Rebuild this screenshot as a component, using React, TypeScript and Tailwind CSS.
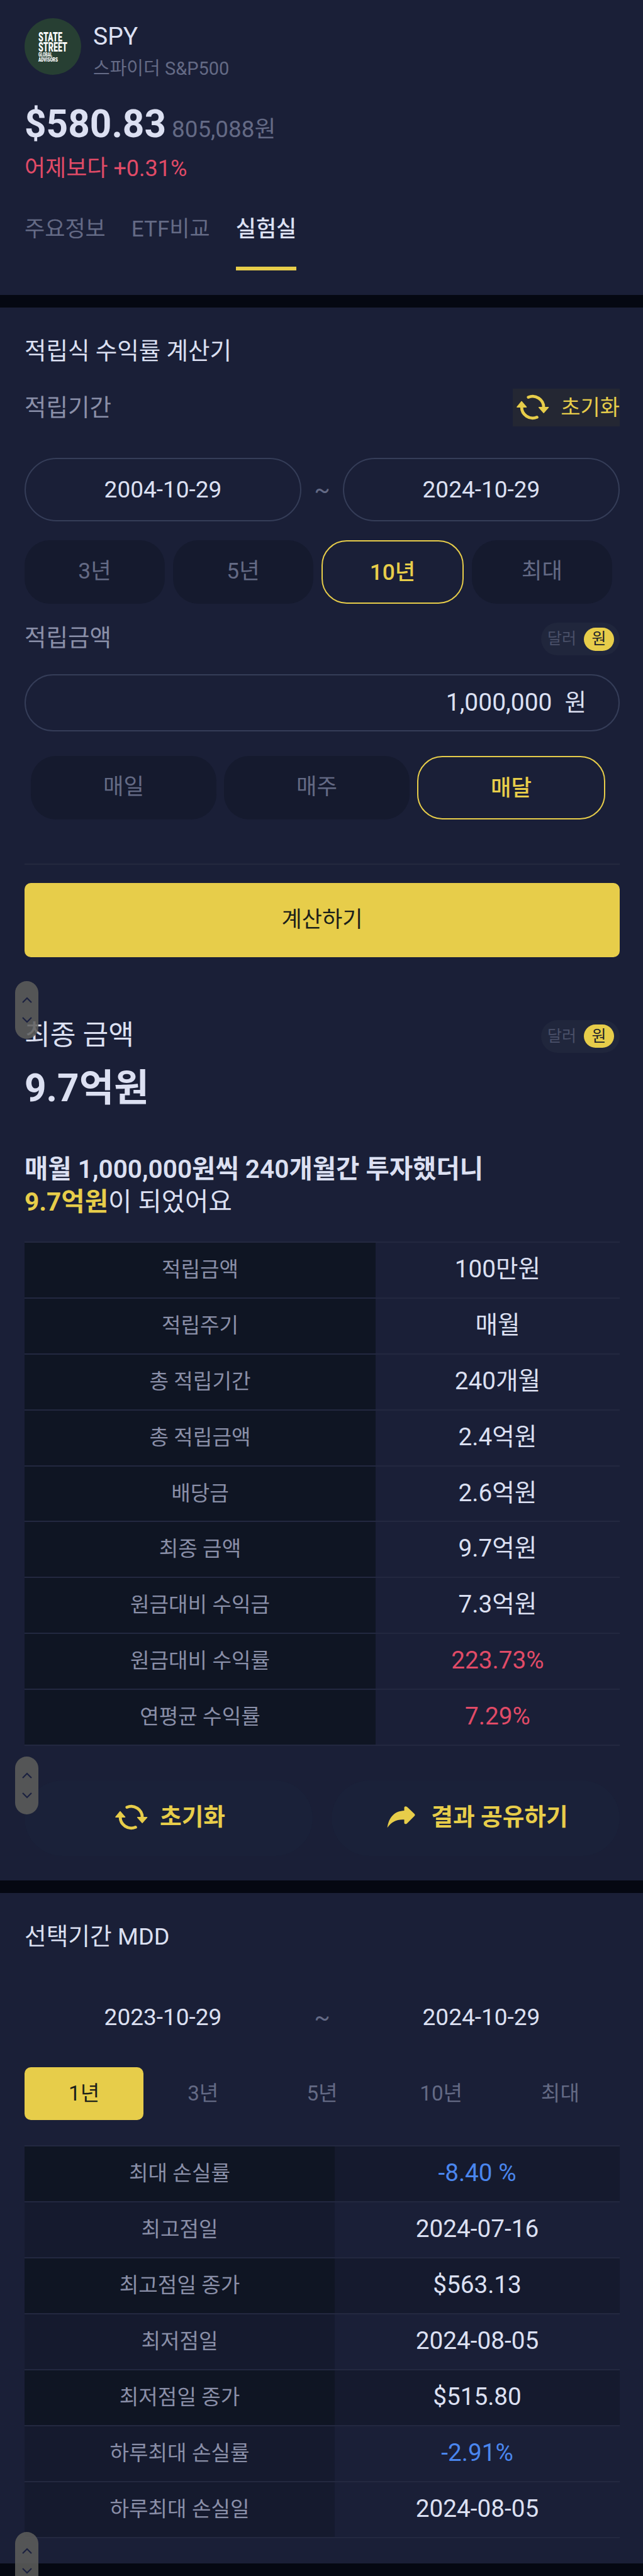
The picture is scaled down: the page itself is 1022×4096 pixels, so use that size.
import { ReactNode } from "react";

const summaryRows = [
  { label: "적립금액", value: "100만원" },
  { label: "적립주기", value: "매월" },
  { label: "총 적립기간", value: "240개월" },
  { label: "총 적립금액", value: "2.4억원" },
  { label: "배당금", value: "2.6억원" },
  { label: "최종 금액", value: "9.7억원" },
  { label: "원금대비 수익금", value: "7.3억원" },
  { label: "원금대비 수익률", value: "223.73%", color: "text-[#e14b67]" },
  { label: "연평균 수익률", value: "7.29%", color: "text-[#e14b67]" },
];

const mddRows = [
  { label: "최대 손실률", value: "-8.40 %", color: "text-[#4a86ee]", dark: true },
  { label: "최고점일", value: "2024-07-16" },
  { label: "최고점일 종가", value: "$563.13", dark: true },
  { label: "최저점일", value: "2024-08-05" },
  { label: "최저점일 종가", value: "$515.80", dark: true },
  { label: "하루최대 손실률", value: "-2.91%", color: "text-[#4a86ee]" },
  { label: "하루최대 손실일", value: "2024-08-05" },
];

const RefreshIcon = () => (
  <svg width="52" height="42" viewBox="0 0 52 42" fill="none">
    <path d="M18.8 4.6A17.5 17.5 0 0 1 43.1 21" stroke="#e7cd4a" strokeWidth="4.8" strokeLinecap="round" />
    <path d="M32.4 36.4A17.5 17.5 0 0 1 8.1 20" stroke="#e7cd4a" strokeWidth="4.8" strokeLinecap="round" />
    <path d="M35.6 20.8H50.6L43.1 29.3Z" fill="#e7cd4a" stroke="#e7cd4a" strokeWidth="1.4" strokeLinejoin="round" />
    <path d="M0.9 20.2H15.6L8 11.4Z" fill="#e7cd4a" stroke="#e7cd4a" strokeWidth="1.4" strokeLinejoin="round" />
  </svg>
);

const ShareIcon = () => (
  <svg width="45" height="35" viewBox="0 0 45 35">
    <path d="M27.5 2Q27.6 0.2 30 0.3Q31.4 0.5 32.5 1.5L43.8 12.3Q45.2 13.9 43.8 15.5L31.8 27.4Q30.5 28.6 28.8 28.2Q27.5 27.8 27.5 26.5V21.2C15.5 20.6 7 24.5 0.6 34.3C3 17 12.5 7.6 27.5 7Z" fill="#e7cd4a" />
  </svg>
);

const ScrollHandle = ({ className }: { className: string }) => (
  <div className={`absolute left-[24px] z-10 flex h-[92px] w-[37px] flex-col items-center rounded-full bg-[#5d5d5b]/87 pt-[25px] ${className}`}>
    <svg width="16" height="42" viewBox="0 0 16 42" fill="none" stroke="#1b2140" strokeWidth="2.2">
      <path d="M1 9L8 2L15 9" />
      <path d="M1 33L8 40L15 33" />
    </svg>
  </div>
);

const CurrencyToggle = () => (
  <div className="flex h-[52px] w-[125px] items-center rounded-full bg-[#20263c] pl-[10px] text-[25px]">
    <span className="w-[58px] text-[#4a5069]">달러</span>
    <span className="flex h-[37px] w-[48px] items-center justify-center rounded-full bg-[#e7cd4a] text-[#1b1f2a]">
      원
    </span>
  </div>
);

const Pill = ({ children, active, className }: { children: ReactNode; active?: boolean; className: string }) => (
  <div
    className={`flex h-[101px] items-center justify-center rounded-[40px] text-[35.3px] ${
      active ? "border-2 border-[#e7cd4a] pt-[2px] font-medium text-[#e7cd4a]" : "bg-[#151a2e] pb-[2px] text-[#646a85]"
    } ${className}`}
  >
    {children}
  </div>
);

export default function App() {
  return (
    <div className="relative h-[4096px] w-[1022px] overflow-hidden bg-[#1a1f37] font-[Roboto,'Noto_Sans_CJK_KR',sans-serif] text-[#dce0f2]">
      {/* header */}
      <header className="h-[469px] pt-[29px] pr-[37px] pl-[39px]">
        <div className="flex h-[91px] gap-[19px]">
          <div className="h-[90px] w-[90px] rounded-full bg-[#273f33]">
            <svg width="90" height="90" viewBox="0 0 90 90" fill="#fff" fontFamily="Roboto" fontWeight="900">
              <text x="22" y="37" fontSize="21" textLength="38" lengthAdjust="spacingAndGlyphs">STATE</text>
              <text x="22" y="53" fontSize="21" textLength="46" lengthAdjust="spacingAndGlyphs">STREET</text>
              <text x="22" y="61" fontSize="9" textLength="22" lengthAdjust="spacingAndGlyphs">GLOBAL</text>
              <text x="22" y="69" fontSize="9" textLength="31" lengthAdjust="spacingAndGlyphs">ADVISORS</text>
            </svg>
          </div>
          <div>
            <h1 className="mt-[6px] h-[53px] text-[39px] leading-[46px]">SPY</h1>
            <p className="text-[29px] leading-[42px] text-[#646a85]">스파이더 S&P500</p>
          </div>
        </div>
        <div className="mt-[40px] flex h-[76px] items-baseline gap-[9px]">
          <span className="text-[60.3px] leading-[76px] font-bold">$580.83</span>
          <span className="text-[36.8px] text-[#646a85]">805,088원</span>
        </div>
        <p className="mt-[8px] h-[48px] text-[36px] leading-[48px] text-[#e14b67]">어제보다 +0.31%</p>
        <nav className="mt-[46px] flex gap-[41px] text-[35px] leading-[54px] text-[#646a85]">
          <span>주요정보</span>
          <span>ETF비교</span>
          <span className="h-[92px] border-b-[6px] border-[#e7cd4a] font-medium text-[#dce0f2]">실험실</span>
        </nav>
      </header>
      <div className="h-[20px] bg-[#050812]" />

      {/* calculator */}
      <section className="h-[2501px] pt-[41px] pr-[37px] pl-[39px]">
        <h2 className="h-[56px] text-[37.5px] leading-[56px]">적립식 수익률 계산기</h2>
        <div className="mt-[32px] flex h-[60px] items-center justify-between">
          <span className="text-[37.5px] text-[#8a8fa8]">적립기간</span>
          <button className="flex h-[60px] w-[170px] items-center justify-between bg-[#242733] pl-[6px] text-[34px] text-[#e7cd4a]">
            <RefreshIcon />
            초기화
          </button>
        </div>
        <div className="mt-[50px] flex items-center justify-between text-[37px]">
          <span className="flex h-[101px] w-[440px] items-center justify-center rounded-full border-2 border-[#353d58]">2004-10-29</span>
          <span className="text-[#646a85]">~</span>
          <span className="flex h-[101px] w-[440px] items-center justify-center rounded-full border-2 border-[#353d58]">2024-10-29</span>
        </div>
        <div className="mt-[30px] flex gap-[13px]">
          <Pill className="w-[223px]">3년</Pill>
          <Pill className="w-[223px]">5년</Pill>
          <Pill className="w-[226px]" active>10년</Pill>
          <Pill className="w-[223px]">최대</Pill>
        </div>
        <div className="mt-[30px] flex h-[52px] items-center justify-between">
          <span className="pb-[4px] text-[37.5px] text-[#8a8fa8]">적립금액</span>
          <CurrencyToggle />
        </div>
        <div className="mt-[30px] flex h-[91px] items-center justify-end gap-[20px] rounded-full border-2 border-[#353d58] pr-[51px] text-[39px]">
          <span>1,000,000</span>
          <span className="text-[37.5px]">원</span>
        </div>
        <div className="mt-[39px] flex gap-[12px] px-[10px]">
          <Pill className="w-[295px]">매일</Pill>
          <Pill className="w-[295px]">매주</Pill>
          <Pill className="w-[299px]" active>매달</Pill>
        </div>
        <div className="mt-[70px] h-[2px] bg-[#24293f]" />
        <button className="mt-[29px] flex h-[118px] w-full items-center justify-center rounded-[10px] bg-[#e7cd4a] text-[35px] text-[#1b1f1a]">
          계산하기
        </button>

        {/* result */}
        <div className="mt-[99px] flex h-[53px] items-center justify-between">
          <span className="pb-[2px] text-[44.3px]">최종 금액</span>
          <CurrencyToggle />
        </div>
        <p className="mt-[17px] h-[80px] text-[60.3px] leading-[80px] font-bold">9.7억원</p>
        <p className="mt-[62px] text-[40.6px] leading-[52px] font-semibold">매월 1,000,000원씩 240개월간 투자했더니</p>
        <p className="text-[40.6px] leading-[52px]">
          <b className="text-[#e7cd4a]">9.7억원</b>이 되었어요
        </p>
        <div className="mt-[37px] border-t-2 border-[#232840]">
          {summaryRows.map((row) => (
            <div key={row.label} className="flex h-[88.9px] border-b-2 border-[#232840] text-center leading-[85px]">
              <div className="w-[558px] bg-[#0f1523] text-[33.2px] text-[#8a8fa8]">{row.label}</div>
              <div className={`flex-1 text-[38.7px] leading-[83px] ${row.color ?? ""}`}>{row.value}</div>
            </div>
          ))}
        </div>
        <div className="mt-[55px] flex justify-between text-[37.7px] font-bold text-[#e7cd4a]">
          <button className="flex h-[120px] w-[458px] items-center justify-center gap-[19px] rounded-full bg-[#1a2139] pb-[3px] pl-[5px]">
            <RefreshIcon />
            초기화
          </button>
          <button className="flex h-[120px] w-[458px] items-center justify-center gap-[25px] rounded-full bg-[#1a2139] pb-[3px] pl-[6px]">
            <ShareIcon />
            결과 공유하기
          </button>
        </div>
      </section>
      <div className="h-[20px] bg-[#050812]" />

      {/* MDD */}
      <section className="h-[1066px] pt-[41px] pr-[37px] pl-[39px]">
        <h2 className="h-[56px] text-[37.7px] leading-[56px]">선택기간 MDD</h2>
        <div className="mt-[50px] flex items-center justify-between text-[37px]">
          <span className="flex h-[101px] w-[440px] items-center justify-center">2023-10-29</span>
          <span className="text-[#646a85]">~</span>
          <span className="flex h-[101px] w-[440px] items-center justify-center">2024-10-29</span>
        </div>
        <div className="mt-[29px] grid grid-cols-5 text-center text-[33.2px] leading-[84px] text-[#646a85]">
          <span className="rounded-[10px] bg-[#e7cd4a] text-[#1b1f1a]">1년</span>
          <span>3년</span>
          <span>5년</span>
          <span>10년</span>
          <span>최대</span>
        </div>
        <div className="mt-[40px] border-t-2 border-[#232840]">
          {mddRows.map((row) => (
            <div key={row.label} className="flex h-[89px] border-b-2 border-[#232840] text-center leading-[86px]">
              <div className={`w-[493px] text-[33.2px] text-[#8a8fa8] ${row.dark ? "bg-[#0f1523]" : "bg-[#151a2e]"}`}>{row.label}</div>
              <div className={`flex-1 text-[38.7px] leading-[84px] ${row.dark ? "bg-[#151a2e]" : ""} ${row.color ?? ""}`}>{row.value}</div>
            </div>
          ))}
        </div>
      </section>
      <div className="h-[20px] bg-[#050812]" />

      <ScrollHandle className="top-[1560px]" />
      <ScrollHandle className="top-[2793px]" />
      <ScrollHandle className="top-[4026px]" />
    </div>
  );
}
